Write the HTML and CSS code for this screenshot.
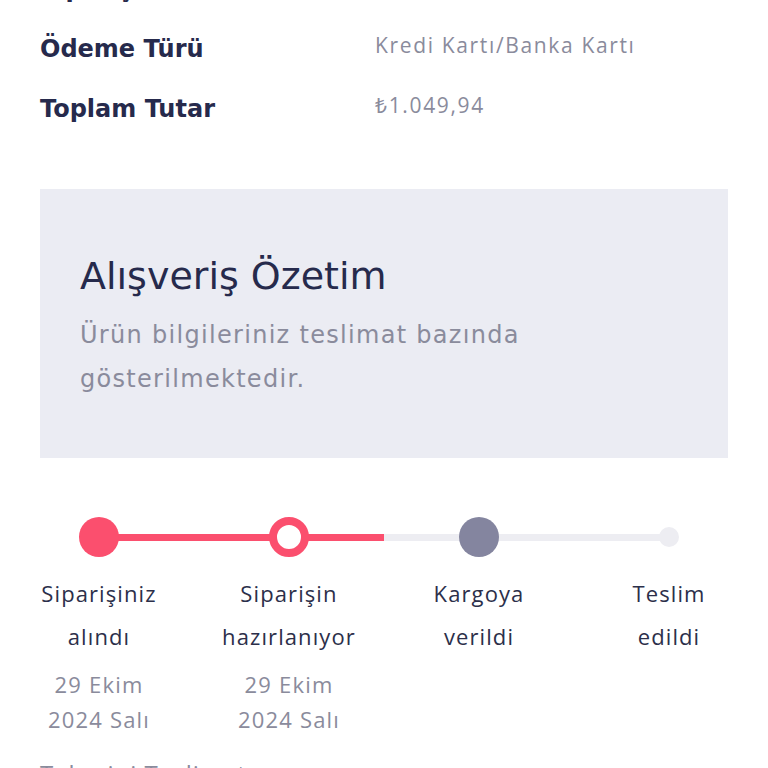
FILE: index.html
```html
<!DOCTYPE html>
<html lang="tr">
<head>
<meta charset="utf-8">
<link rel="stylesheet" href="styles.css">
</head>
<body>
<div class="page">
  <div class="info">
    <div class="row"><div class="label">Sipariş Tarihi</div><div class="value">29 Ekim 2024</div></div>
    <div class="row"><div class="label">Ödeme Türü</div><div class="value">Kredi Kartı/Banka Kartı</div></div>
    <div class="row"><div class="label">Toplam Tutar</div><div class="value">₺1.049,94</div></div>
  </div>
  <div class="card">
    <h2 class="card-title">Alışveriş Özetim</h2>
    <p class="card-text">Ürün bilgileriniz teslimat bazında gösterilmektedir.</p>
  </div>
  <div class="stepper">
    <div class="track"><div class="track-fill"></div></div>
    <div class="step">
      <div class="dot-wrap"><span class="dot done"></span></div>
      <div class="step-label">Siparişiniz<br>alındı</div>
      <div class="step-date">29 Ekim<br>2024 Salı</div>
    </div>
    <div class="step">
      <div class="dot-wrap"><span class="dot current"></span></div>
      <div class="step-label">Siparişin<br>hazırlanıyor</div>
      <div class="step-date">29 Ekim<br>2024 Salı</div>
    </div>
    <div class="step">
      <div class="dot-wrap"><span class="dot next"></span></div>
      <div class="step-label">Kargoya<br>verildi</div>
    </div>
    <div class="step">
      <div class="dot-wrap"><span class="dot last"></span></div>
      <div class="step-label">Teslim<br>edildi</div>
    </div>
  </div>
  <div class="estimate">Tahmini Teslimat</div>
</div>
</body>
</html>
```
FILE: styles.css
```css
html, body {
  margin: 0;
  padding: 0;
  background: #ffffff;
}
body {
  font-family: "Open Sans", "Noto Sans", sans-serif;
  color: #262a4c;
}
.page {
  margin-top: -41px;
}
.info {
  padding: 0 40px;
}
.row {
  display: flex;
  height: 60px;
  align-items: center;
}
.label {
  width: 335px;
  font-family: "DejaVu Sans", sans-serif;
  font-weight: 700;
  font-size: 24px;
  color: #262a4c;
}
.value {
  font-family: "Open Sans", sans-serif;
  font-size: 21px;
  letter-spacing: 1.65px;
  color: #8a8b9c;
  margin-top: -8px;
}
.card {
  margin: 50px 40px 0;
  height: 269px;
  background: #ebecf3;
  padding: 63px 40px 0;
  box-sizing: border-box;
}
.card-title {
  margin: 0 0 13px;
  font-family: "DejaVu Sans", sans-serif;
  font-weight: 400;
  font-size: 38px;
  line-height: 48px;
  color: #262a4c;
}
.card-text {
  margin: 0;
  font-family: "DejaVu Sans", sans-serif;
  font-size: 24px;
  letter-spacing: 1.3px;
  line-height: 44px;
  color: #8a8b9c;
  max-width: 480px;
}
.stepper {
  position: relative;
  display: grid;
  grid-template-columns: repeat(4, 190px);
  justify-content: center;
  margin-top: 59px;
}
.track {
  position: absolute;
  top: 17px;
  left: 99px;
  width: 570px;
  height: 7px;
  background: #ededf2;
}
.track-fill {
  width: 285px;
  height: 100%;
  background: #fb4f6e;
}
.step {
  display: flex;
  flex-direction: column;
  align-items: center;
  text-align: center;
}
.dot-wrap {
  position: relative;
  height: 40px;
  display: flex;
  align-items: center;
  justify-content: center;
}
.dot {
  display: block;
  border-radius: 50%;
  box-sizing: border-box;
}
.dot.done {
  width: 40px;
  height: 40px;
  background: #fb4f6e;
}
.dot.current {
  width: 40px;
  height: 40px;
  background: #ffffff;
  border: 8px solid #fb4f6e;
}
.dot.next {
  width: 40px;
  height: 40px;
  background: #84859f;
}
.dot.last {
  width: 20px;
  height: 20px;
  background: #ededf2;
}
.step-label {
  margin-top: 15px;
  font-size: 22px;
  letter-spacing: 1.1px;
  line-height: 43px;
  color: #2c2f4a;
}
.step-date {
  margin-top: 9px;
  font-size: 22px;
  letter-spacing: 1.2px;
  line-height: 35px;
  color: #8a8b9c;
}
.estimate {
  margin: 20px 40px 0;
  font-size: 24px;
  letter-spacing: 1px;
  color: #8a8b9c;
}
```
